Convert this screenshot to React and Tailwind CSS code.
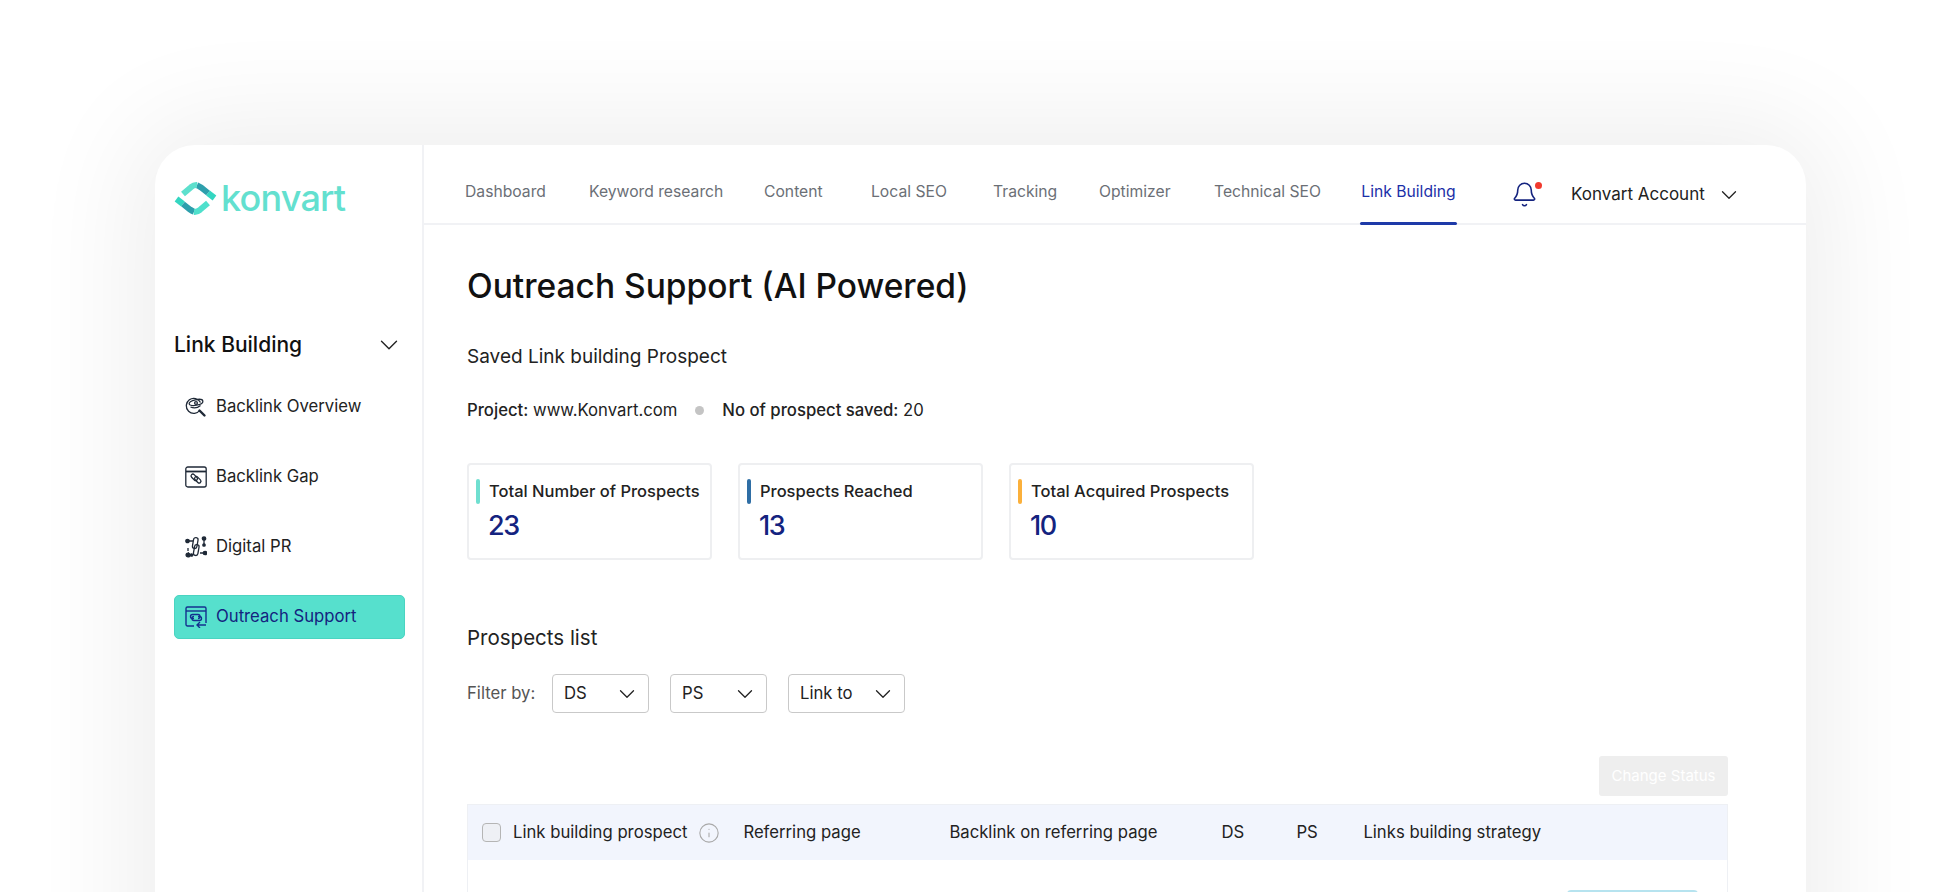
import React from "react";
import { ChevronDown, Bell, Info } from "lucide-react";

const tabs = [
  { label: "Dashboard", w: "w-[82px]" },
  { label: "Keyword research", w: "w-[133px]" },
  { label: "Content", w: "w-[65px]" },
  { label: "Local SEO", w: "w-[80px]" },
  { label: "Tracking", w: "w-[64px]" },
  { label: "Optimizer", w: "w-[73px]" },
  { label: "Technical SEO", w: "w-[104px]" },
];

const stats = [
  { label: "Total Number of Prospects", value: "23", bar: "bg-[#6fdfd0]" },
  { label: "Prospects Reached", value: "13", bar: "bg-[#2f6ea5]" },
  { label: "Total Acquired Prospects", value: "10", bar: "bg-[#fbb03b]" },
];

function Logo() {
  return (
    <div className="flex items-center gap-[4px]">
      <svg width="43" height="33" viewBox="0 0 43 33" fill="none" strokeWidth="6">
        <path d="M2.500 17 L9 22" stroke="#34d6c1" />
        <path d="M9 22 L16 27.500 Q18 29 20 29.800" stroke="#2d9fac" />
        <path d="M20 29.900 Q23 30.200 26 27.800 L34 21" stroke="#4fe0cc" />
        <path d="M40.500 16 L34 11" stroke="#34d6c1" />
        <path d="M34 11 L27 5.500 Q25 4 23 3.200" stroke="#2d9fac" />
        <path d="M23 3.100 Q20 2.800 17 5.200 L9 12" stroke="#5de0cd" />
      </svg>
      <span className="text-[36px] font-medium leading-none tracking-[-0.8px] text-[#63e0cf]">konvart</span>
    </div>
  );
}

function OverviewIcon() {
  return (
    <svg width="22" height="22" viewBox="0 0 22 22" fill="none" stroke="#1f2937" strokeWidth="1.300">
      <path d="M15.500 6.500A7.500 7.500 0 1 0 15 14" />
      <ellipse cx="11" cy="6.500" rx="7" ry="2.800" transform="rotate(-12 11 6.500)" />
      <path d="M5.500 11c3 1.300 7 1 10-1.500" />
      <circle cx="11" cy="7" r="1.400" />
      <path d="M14.500 14.500l5 5" strokeWidth="2.400" strokeLinecap="round" />
    </svg>
  );
}

function GapIcon() {
  return (
    <svg width="22" height="22" viewBox="0 0 22 22" fill="none" stroke="#1f2937" strokeWidth="1.300">
      <rect x="0.800" y="1" width="20.400" height="20" rx="2" />
      <path d="M1 5.500h20" strokeWidth="1.800" />
      <rect x="5.500" y="9.500" width="7.500" height="3.600" rx="1.800" transform="rotate(45 9.250 11.300)" />
      <rect x="9" y="12" width="7.500" height="3.600" rx="1.800" transform="rotate(45 12.750 13.800)" />
    </svg>
  );
}

function PrIcon() {
  return (
    <svg width="22" height="22" viewBox="0 0 22 22" fill="none" stroke="#1f2937" strokeWidth="1.300">
      <rect x="8" y="1.500" width="4.500" height="11" rx="2.250" transform="rotate(10 10 7)" />
      <rect x="9" y="8.500" width="4.500" height="11" rx="2.250" transform="rotate(10 11 14)" />
      <path d="M3 5h5M3 17h1M15 17h5M19 8V3M3 12v3" />
      <circle cx="2.500" cy="5" r="1.700" fill="#1f2937" />
      <circle cx="3" cy="19" r="1.900" fill="#1f2937" />
      <circle cx="20" cy="17" r="1.700" fill="#1f2937" />
      <circle cx="19" cy="2.500" r="1.700" fill="#1f2937" />
      <circle cx="19" cy="9" r="1.200" fill="#1f2937" />
      <circle cx="6.500" cy="19" r="1.200" fill="#1f2937" />
    </svg>
  );
}

function OutreachIcon() {
  return (
    <svg width="22" height="22" viewBox="0 0 22 22" fill="none" stroke="#14308f" strokeWidth="1.400">
      <path d="M9 20H2.500A1.500 1.500 0 0 1 1 18.500V2.500A1.500 1.500 0 0 1 2.500 1h17A1.500 1.500 0 0 1 21 2.500V17" />
      <path d="M1 5h20" />
      <path d="M9 12.500H7.500a2 2 0 0 1 0-4H13a2 2 0 0 1 0 4" />
      <path d="M13 10.500h1.500a2 2 0 0 1 0 4H9a2 2 0 0 1 0-4" />
      <path d="M21 19h-9M15 16l-3 3 3 3" />
    </svg>
  );
}

const sideItems = [
  { label: "Backlink Overview", icon: <OverviewIcon /> },
  { label: "Backlink Gap", icon: <GapIcon /> },
  { label: "Digital PR", icon: <PrIcon /> },
];

function Select({ label, w }) {
  return (
    <div className={`flex h-[39px] ${w} items-center justify-between rounded-[4px] border border-[#c9c9c9] pl-[11px] pr-[8px] text-[16.700px] text-[#222]`}>
      <span>{label}</span>
      <ChevronDown size={26} strokeWidth={1.200} />
    </div>
  );
}

export default function App() {
  return (
    <div className="h-[892px] w-full overflow-hidden bg-white font-['Inter',sans-serif]">
      <div className="ml-[155px] mt-[145px] flex h-[900px] w-[1651px] rounded-t-[40px] bg-white shadow-[0_0_110px_20px_rgba(0,0,0,0.07)]">
        <aside className="w-[269px] shrink-0 border-r-2 border-[#f1f2f5] pl-[19px] pr-[18px]">
          <div className="pt-[35px]">
            <Logo />
          </div>
          <div className="mt-[113px] flex h-[31px] items-center justify-between">
            <span className="text-[21px] font-medium text-[#111]">Link Building</span>
            <ChevronDown size={30} strokeWidth={1.100} className="text-[#222]" />
          </div>
          <div className="mt-[25px] flex flex-col gap-[26px]">
            {sideItems.map((it) => (
              <div key={it.label} className="flex h-[44px] items-center gap-[9px] pl-[11px]">
                {it.icon}
                <span className="text-[16.700px] text-[#222]">{it.label}</span>
              </div>
            ))}
            <div className="flex h-[44px] w-[231px] items-center gap-[9px] rounded-[5px] border border-[#4ad4c1] bg-[#56e0cd] pl-[10px]">
              <OutreachIcon />
              <span className="text-[16.700px] text-[#14237f]">Outreach Support</span>
            </div>
          </div>
        </aside>

        <main className="min-w-0 flex-1">
          <header className="flex h-[80px] items-center border-b-2 border-[#f1f2f5] pl-[41px]">
            <nav className="flex h-full items-center gap-[42px]">
              {tabs.map((t) => (
                <span key={t.label} className={`${t.w} whitespace-nowrap pt-[15px] text-[15.700px] text-[#6b6f76]`}>
                  {t.label}
                </span>
              ))}
              <span className="relative flex h-full w-[97px] items-center justify-center whitespace-nowrap pt-[15px] text-[15.700px] text-[#1a2fa8]">
                Link Building
                <span className="absolute bottom-[-2px] left-0 right-0 h-[3px] rounded-full bg-[#1e3aa8]" />
              </span>
            </nav>
            <div className="relative ml-[54px] mt-[20px]">
              <Bell size={27} strokeWidth={1.400} className="text-[#14237f]" />
              <span className="absolute right-[-4px] top-[1px] h-[7px] w-[7px] rounded-full bg-[#f13a2e]" />
            </div>
            <span className="ml-[33px] mt-[22px] whitespace-nowrap text-[17px] text-[#222]">Konvart Account</span>
            <ChevronDown size={26} strokeWidth={1.200} className="ml-[11px] mt-[22px] text-[#222]" />
          </header>

          <section className="pl-[43px] pr-[78px]">
            <h1 className="mt-[39px] text-[33.500px] font-medium leading-[44px] text-[#111]">Outreach Support (AI Powered)</h1>
            <p className="mt-[36px] text-[19px] leading-[26px] text-[#222]">Saved Link building Prospect</p>
            <div className="mt-[28px] flex items-center text-[16.700px] leading-[24px] text-[#222]">
              <span>
                <span className="font-medium">Project:</span> www.Konvart.com
              </span>
              <span className="mx-[18px] h-[9px] w-[9px] rounded-full bg-[#c4c4c4]" />
              <span>
                <span className="font-medium">No of prospect saved:</span> 20
              </span>
            </div>

            <div className="mt-[41px] flex gap-[26px]">
              {stats.map((s) => (
                <div key={s.label} className="h-[97px] w-[245px] rounded-[4px] border-2 border-[#eeeff1] bg-white pl-[7px] pt-[14px]">
                  <div className="flex items-center gap-[9px]">
                    <span className={`h-[25px] w-[4px] rounded-full ${s.bar}`} />
                    <span className="whitespace-nowrap text-[16.500px] font-medium text-[#222]">{s.label}</span>
                  </div>
                  <div className="mt-[5px] pl-[12px] text-[27px] font-medium leading-[34px] tracking-[-1.500px] text-[#14237f]">{s.value}</div>
                </div>
              ))}
            </div>

            <h2 className="mt-[64px] text-[20.500px] leading-[28px] text-[#222]">Prospects list</h2>
            <div className="mt-[22px] flex items-center">
              <span className="w-[85px] text-[16.700px] text-[#555]">Filter by:</span>
              <div className="flex gap-[21px]">
                <Select label="DS" w="w-[97px]" />
                <Select label="PS" w="w-[97px]" />
                <Select label="Link to" w="w-[117px]" />
              </div>
            </div>

            <div className="mt-[43px] flex justify-end">
              <button className="h-[40px] w-[129px] rounded-[3px] bg-[#eeeeee] text-[15px] text-white">Change Status</button>
            </div>

            <div className="mt-[8px] border-x border-t border-[#eef0f4]">
              <div className="flex h-[55px] items-center bg-[#f2f5fd] pl-[14px] text-[16.700px] text-[#222]">
                <span className="h-[19px] w-[19px] rounded-[4px] border border-[#b5b5b5] bg-[#eef0f5]" />
                <span className="ml-[12px] whitespace-nowrap">Link building prospect</span>
                <Info size={22} strokeWidth={1.200} className="ml-[11px] text-[#a9a9a9]" />
                <span className="ml-[23px] w-[206px] whitespace-nowrap">Referring page</span>
                <span className="w-[272px] whitespace-nowrap">Backlink on referring page</span>
                <span className="w-[75px]">DS</span>
                <span className="w-[67px]">PS</span>
                <span className="whitespace-nowrap">Links building strategy</span>
              </div>
              <div className="flex justify-end pr-[29px] pt-[30px]">
                <span className="h-[40px] w-[131px] rounded-[4px] bg-[#b6e3ef]" />
              </div>
            </div>
          </section>
        </main>
      </div>
    </div>
  );
}
